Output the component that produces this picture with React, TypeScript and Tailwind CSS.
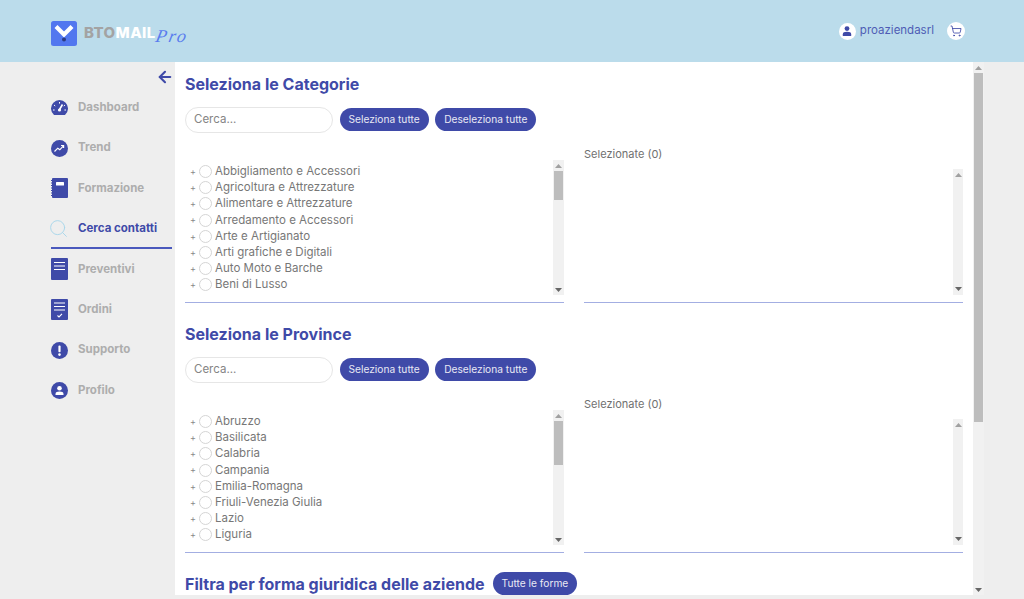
import { ArrowLeft, Search, ShoppingCart } from 'lucide-react';
import type { ReactNode } from 'react';

const FONT = 'font-["Inter","Liberation_Sans",sans-serif]';
const categorie = [
  'Abbigliamento e Accessori',
  'Agricoltura e Attrezzature',
  'Alimentare e Attrezzature',
  'Arredamento e Accessori',
  'Arte e Artigianato',
  'Arti grafiche e Digitali',
  'Auto Moto e Barche',
  'Beni di Lusso',
];
const province = [
  'Abruzzo',
  'Basilicata',
  'Calabria',
  'Campania',
  'Emilia-Romagna',
  'Friuli-Venezia Giulia',
  'Lazio',
  'Liguria',
];

const BLUE = '#3f4aa8';

const UserGlyph = ({ size = 10 }: { size?: number }) => (
  <svg width={size} height={size} viewBox="0 0 10 10" fill={BLUE}>
    <circle cx="5" cy="2.6" r="2.4" />
    <path d="M0.8 10V8.2C0.8 6.6 2.2 5.8 5 5.8s4.2.8 4.2 2.4V10z" />
  </svg>
);

const icons: Record<string, ReactNode> = {
  Dashboard: (
    <svg width="17" height="15" viewBox="0 0 17 15">
      <path d="M3 15A8.5 8.5 0 1 1 14 15z" fill={BLUE} />
      <path d="M8.5 9.5L11.5 4.5" stroke="#fff" strokeWidth="1.6" />
      <circle cx="8.5" cy="10" r="1.6" fill="#fff" />
      <path d="M8.5 2v1.6M3 5l1.2 1M14 5l-1.2 1M2 10h1.6M15 10h-1.6" stroke="#fff" strokeWidth="1" />
    </svg>
  ),
  Trend: (
    <svg width="17" height="17" viewBox="0 0 17 17">
      <circle cx="8.5" cy="8.5" r="8.5" fill={BLUE} />
      <path d="M3.5 11.5L6.8 8.2l2 1.6 3.6-4M10 5.5h2.6v2.6" fill="none" stroke="#fff" strokeWidth="1.2" />
    </svg>
  ),
  Formazione: (
    <svg width="17" height="20" viewBox="0 0 17 20">
      <rect x="1" width="16" height="20" rx="1" fill={BLUE} />
      <path d="M0 2.5h2M0 5h2M0 7.5h2M0 10h2M0 12.5h2M0 15h2M0 17.5h2" stroke={BLUE} strokeWidth="1" />
      <rect x="5" y="4" width="8" height="3.5" rx=".5" fill="#fff" />
    </svg>
  ),
  'Cerca contatti': <Search size={21} strokeWidth={1.1} color="#a9d6ea" className="-ml-[2px] shrink-0" />,
  Preventivi: (
    <svg width="17" height="22" viewBox="0 0 17 22">
      <rect width="17" height="22" rx="1" fill={BLUE} />
      <path d="M3 4.5h11M3 8h11M3 11.5h11" stroke="#fff" strokeWidth="1.2" />
    </svg>
  ),
  Ordini: (
    <svg width="17" height="21" viewBox="0 0 17 21">
      <rect width="17" height="21" rx="1" fill={BLUE} />
      <path d="M3 4h11M3 7.5h11M3 11h11" stroke="#fff" strokeWidth="1.1" />
      <path d="M6.5 16.5l1.5 1.4 3-3" fill="none" stroke="#fff" strokeWidth="1.1" />
    </svg>
  ),
  Supporto: (
    <svg width="17" height="17" viewBox="0 0 17 17">
      <circle cx="8.5" cy="8.5" r="8.5" fill={BLUE} />
      <rect x="7.4" y="3.5" width="2.2" height="6.8" rx="1" fill="#fff" />
      <circle cx="8.5" cy="12.6" r="1.3" fill="#fff" />
    </svg>
  ),
  Profilo: (
    <svg width="17" height="17" viewBox="0 0 17 17">
      <circle cx="8.5" cy="8.5" r="8.5" fill={BLUE} />
      <circle cx="8.5" cy="6.3" r="2.3" fill="#fff" />
      <path d="M4.5 13v-1c0-1.6 1.6-2.4 4-2.4s4 .8 4 2.4v1z" fill="#fff" />
    </svg>
  ),
};

const navRows = ['Dashboard', 'Trend', 'Formazione', 'Cerca contatti', 'Preventivi', 'Ordini', 'Supporto', 'Profilo'];

function ScrollArrow({ up }: { up?: boolean }) {
  return (
    <svg width="7" height="4" viewBox="0 0 7 4" fill={up ? '#a0a0a0' : '#666'} className={up ? '' : 'rotate-180'}>
      <path d="M3.5 0L7 4H0z" />
    </svg>
  );
}

function PillButton({ children }: { children: ReactNode }) {
  return (
    <button className="-mt-px h-[23px] rounded-full bg-[#3f4aa8] px-[9px] text-[10.2px] leading-none whitespace-nowrap text-[#e9e9f4]">
      {children}
    </button>
  );
}

function Section({ title, items, thumb }: { title: string; items: string[]; thumb: number }) {
  return (
    <section className="h-[250px] shrink-0">
      <h2 className="h-[22px] text-[16px] leading-[22px] font-bold text-[#3f4aa8]">{title}</h2>
      <div className="mt-[12px] flex items-center gap-[6.5px]">
        <div className="flex h-[26px] w-[148px] items-center rounded-full border border-[#e6e6e6] bg-white pl-[8px] text-[11.5px] text-[#858585]">
          Cerca...
        </div>
        <PillButton>Seleziona tutte</PillButton>
        <PillButton>Deseleziona tutte</PillButton>
      </div>
      <div className="mt-[14px] flex gap-[20px]">
        <div className="h-[156px] w-[379px] border-b border-[#a3aee2]">
          <div className="mt-[13px] flex h-[135px] justify-between">
            <ul className="pt-[3.5px]">
              {items.map((item) => (
                <li key={item} className="flex h-[16.2px] items-center text-[11.5px] text-[#777777]">
                  <span className="w-[14px] pl-[5px] text-[9px] text-[#888]">+</span>
                  <span className="mr-[3px] size-[13px] rounded-full border border-[#d5d5d5] bg-white" />
                  {item}
                </li>
              ))}
            </ul>
            <div className="flex w-[11px] flex-col items-center bg-[#f1f1f1]">
              <div className="flex h-[11px] items-center">
                <ScrollArrow up />
              </div>
              <div className="w-[9px] bg-[#bdbdbd]" style={{ height: thumb }} />
              <div className="mt-auto flex h-[11px] items-center">
                <ScrollArrow />
              </div>
            </div>
          </div>
        </div>
        <div className="h-[156px] w-[379px] border-b border-[#a3aee2]">
          <p className="h-[22px] text-[11px] leading-[15px] text-[#707070]">Selezionate (0)</p>
          <div className="flex h-[126px] justify-end">
            <div className="flex w-[10px] flex-col items-center justify-between bg-[#f1f1f1] py-[4px]">
              <ScrollArrow up />
              <ScrollArrow />
            </div>
          </div>
        </div>
      </div>
    </section>
  );
}

export default function App() {
  return (
    <div className={`${FONT} flex h-[599px] w-[1024px] flex-col overflow-hidden bg-[#eeeeee]`}>
      <header className="flex h-[62px] shrink-0 items-center bg-[#bbdceb] pr-[59px] pl-[51px]">
        <div className="relative flex items-center gap-[7px] pt-[5px]">
          <svg width="26" height="25" viewBox="0 0 26 25">
            <rect width="26" height="25" rx="2.5" fill="#5277ef" />
            <path d="M5 5.5l8 8 8-8" fill="none" stroke="#fff" strokeWidth="4.2" />
            <circle cx="13" cy="18.5" r="2" fill="#2c3a80" />
          </svg>
          <span className="text-[15px] font-extrabold tracking-[0.4px]">
            <span className="text-[#a3a3a3]">BTO</span>
            <span className="text-white">MAIL</span>
          </span>
          <span className="absolute top-[11px] left-[105px] -skew-x-12 font-['Liberation_Serif',serif] text-[18px] leading-none tracking-[2px] text-[#5a7cee] italic">
            Pro
          </span>
        </div>
        <div className="ml-auto flex items-center">
          <span className="flex size-[17px] items-center justify-center rounded-full bg-white">
            <UserGlyph />
          </span>
          <span className="ml-[4px] text-[11.5px] text-[#4f5cb5]">proaziendasrl</span>
          <span className="ml-[13px] flex size-[18px] items-center justify-center rounded-full bg-white">
            <ShoppingCart size={12} color={BLUE} strokeWidth={1.7} />
          </span>
        </div>
      </header>

      <div className="flex min-h-0 flex-1">
        <aside className="relative w-[175px] shrink-0 pt-[25.5px] pl-[51px]">
          <ArrowLeft size={18} strokeWidth={2.8} color={BLUE} className="absolute top-[6px] right-[1px]" />
          <nav className="flex flex-col">
            {navRows.map((row) => {
              const active = row === 'Cerca contatti';
              return (
                <div
                  key={row}
                  className={`flex h-[40.4px] w-[121px] items-center gap-[10px] ${active ? 'border-b-2 border-[#4a59bd] pt-[2px]' : ''}`}
                >
                  <span className="flex w-[17px] shrink-0 justify-center">{icons[row]}</span>
                  <span className={`text-[11.5px] font-bold ${active ? 'text-[#3f4aa8]' : 'text-[#adadad]'}`}>{row}</span>
                </div>
              );
            })}
          </nav>
        </aside>

        <main className="flex h-[533px] w-[809px] shrink-0">
          <div className="h-full w-[798px] shrink-0 overflow-hidden bg-white pt-[11px] pl-[10px]">
            <Section title="Seleziona le Categorie" items={categorie} thumb={29} />
            <Section title="Seleziona le Province" items={province} thumb={44} />
            <div className="flex items-center gap-[8px]">
              <h2 className="text-[16px] leading-[22px] font-bold text-[#3f4aa8]">Filtra per forma giuridica delle aziende</h2>
              <PillButton>Tutte le forme</PillButton>
            </div>
          </div>
          <div className="flex h-[533px] w-[11px] flex-col items-center bg-[#f1f1f1]">
            <div className="flex h-[11px] items-center">
              <ScrollArrow up />
            </div>
            <div className="h-[349px] w-[9px] bg-[#bdbdbd]" />
            <div className="mt-auto flex h-[11px] items-center">
              <ScrollArrow />
            </div>
          </div>
        </main>
      </div>
    </div>
  );
}
